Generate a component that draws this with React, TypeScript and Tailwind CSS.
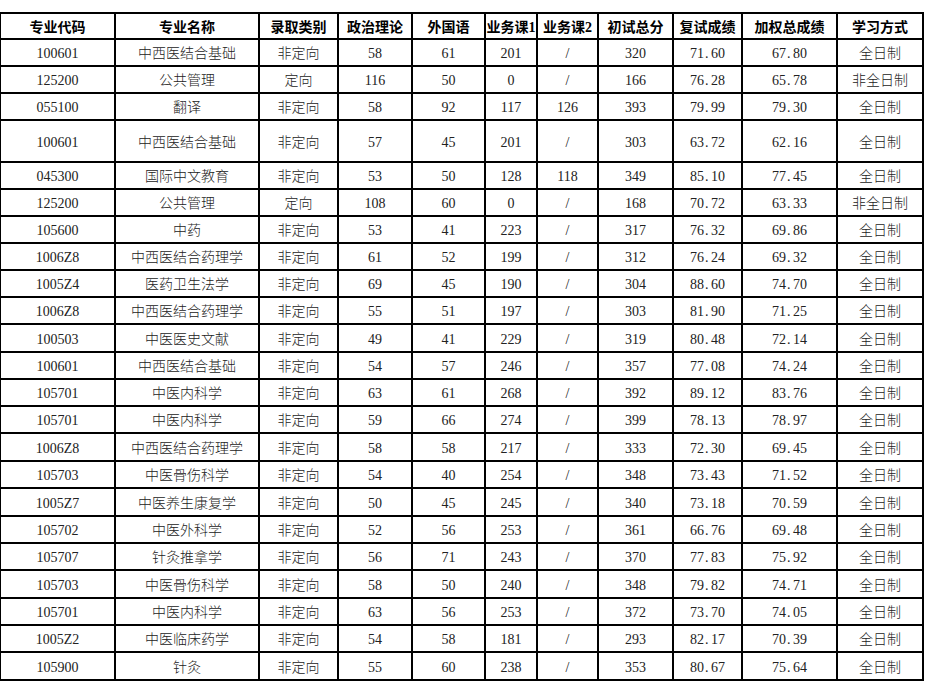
import React from "react";

const headers = ["专业代码", "专业名称", "录取类别", "政治理论", "外国语", "业务课1", "业务课2", "初试总分", "复试成绩", "加权总成绩", "学习方式"];

const rows: string[][] = [
  ["100601", "中西医结合基础", "非定向", "58", "61", "201", "/", "320", "71.60", "67.80", "全日制"],
  ["125200", "公共管理", "定向", "116", "50", "0", "/", "166", "76.28", "65.78", "非全日制"],
  ["055100", "翻译", "非定向", "58", "92", "117", "126", "393", "79.99", "79.30", "全日制"],
  ["100601", "中西医结合基础", "非定向", "57", "45", "201", "/", "303", "63.72", "62.16", "全日制"],
  ["045300", "国际中文教育", "非定向", "53", "50", "128", "118", "349", "85.10", "77.45", "全日制"],
  ["125200", "公共管理", "定向", "108", "60", "0", "/", "168", "70.72", "63.33", "非全日制"],
  ["105600", "中药", "非定向", "53", "41", "223", "/", "317", "76.32", "69.86", "全日制"],
  ["1006Z8", "中西医结合药理学", "非定向", "61", "52", "199", "/", "312", "76.24", "69.32", "全日制"],
  ["1005Z4", "医药卫生法学", "非定向", "69", "45", "190", "/", "304", "88.60", "74.70", "全日制"],
  ["1006Z8", "中西医结合药理学", "非定向", "55", "51", "197", "/", "303", "81.90", "71.25", "全日制"],
  ["100503", "中医医史文献", "非定向", "49", "41", "229", "/", "319", "80.48", "72.14", "全日制"],
  ["100601", "中西医结合基础", "非定向", "54", "57", "246", "/", "357", "77.08", "74.24", "全日制"],
  ["105701", "中医内科学", "非定向", "63", "61", "268", "/", "392", "89.12", "83.76", "全日制"],
  ["105701", "中医内科学", "非定向", "59", "66", "274", "/", "399", "78.13", "78.97", "全日制"],
  ["1006Z8", "中西医结合药理学", "非定向", "58", "58", "217", "/", "333", "72.30", "69.45", "全日制"],
  ["105703", "中医骨伤科学", "非定向", "54", "40", "254", "/", "348", "73.43", "71.52", "全日制"],
  ["1005Z7", "中医养生康复学", "非定向", "50", "45", "245", "/", "340", "73.18", "70.59", "全日制"],
  ["105702", "中医外科学", "非定向", "52", "56", "253", "/", "361", "66.76", "69.48", "全日制"],
  ["105707", "针灸推拿学", "非定向", "56", "71", "243", "/", "370", "77.83", "75.92", "全日制"],
  ["105703", "中医骨伤科学", "非定向", "58", "50", "240", "/", "348", "79.82", "74.71", "全日制"],
  ["105701", "中医内科学", "非定向", "63", "56", "253", "/", "372", "73.70", "74.05", "全日制"],
  ["1005Z2", "中医临床药学", "非定向", "54", "58", "181", "/", "293", "82.17", "70.39", "全日制"],
  ["105900", "针灸", "非定向", "55", "60", "238", "/", "353", "80.67", "75.64", "全日制"],
];

const heights = [
  "h-[27px]", "h-[27px]", "h-[27px]", "h-[42px]",
  "h-[27px]", "h-[27px]", "h-[27px]", "h-[27px]", "h-[27px]", "h-[27px]", "h-[28px]", "h-[27px]", "h-[27px]", "h-[27px]",
  "h-[28px]", "h-[27px]", "h-[28px]", "h-[27px]", "h-[27px]", "h-[28px]", "h-[27px]", "h-[27px]", "h-[28px]",
];

const grid = "grid grid-cols-[115px_144px_79px_74px_73px_52px_61px_75px_69px_95px_86px]";

function Cell({ value }: { value: string }) {
  if (/^\d+\.\d+$/.test(value)) {
    const [a, b] = value.split(".");
    return (
      <span className="inline-flex items-center">
        {a}
        <span className="inline-block w-[7px] text-left pl-[1px]">.</span>
        {b}
      </span>
    );
  }
  return <span>{value}</span>;
}

export default function App() {
  return (
    <div className="w-[927px] h-[687px] bg-white pt-[12px]">
      <div
        className="w-[924px] border-t-2 border-l border-black"
        style={{ fontFamily: "'Liberation Serif', 'Noto Sans CJK SC', serif" }}
      >
        <div className={`${grid} h-[26px]`}>
          {headers.map((h, i) => (
            <div
              key={i}
              className="border-r-2 border-b-2 border-black flex items-center justify-center pt-[3px] text-[14px] font-bold text-black leading-none"
            >
              {h}
            </div>
          ))}
        </div>
        {rows.map((r, ri) => (
          <div key={ri} className={`${grid} ${heights[ri]}`}>
            {r.map((c, ci) => (
              <div
                key={ci}
                className="border-r-2 border-b-2 border-black flex items-center justify-center pt-[3px] text-[14px] font-light text-[#222] leading-none"
              >
                <Cell value={c} />
              </div>
            ))}
          </div>
        ))}
      </div>
    </div>
  );
}
